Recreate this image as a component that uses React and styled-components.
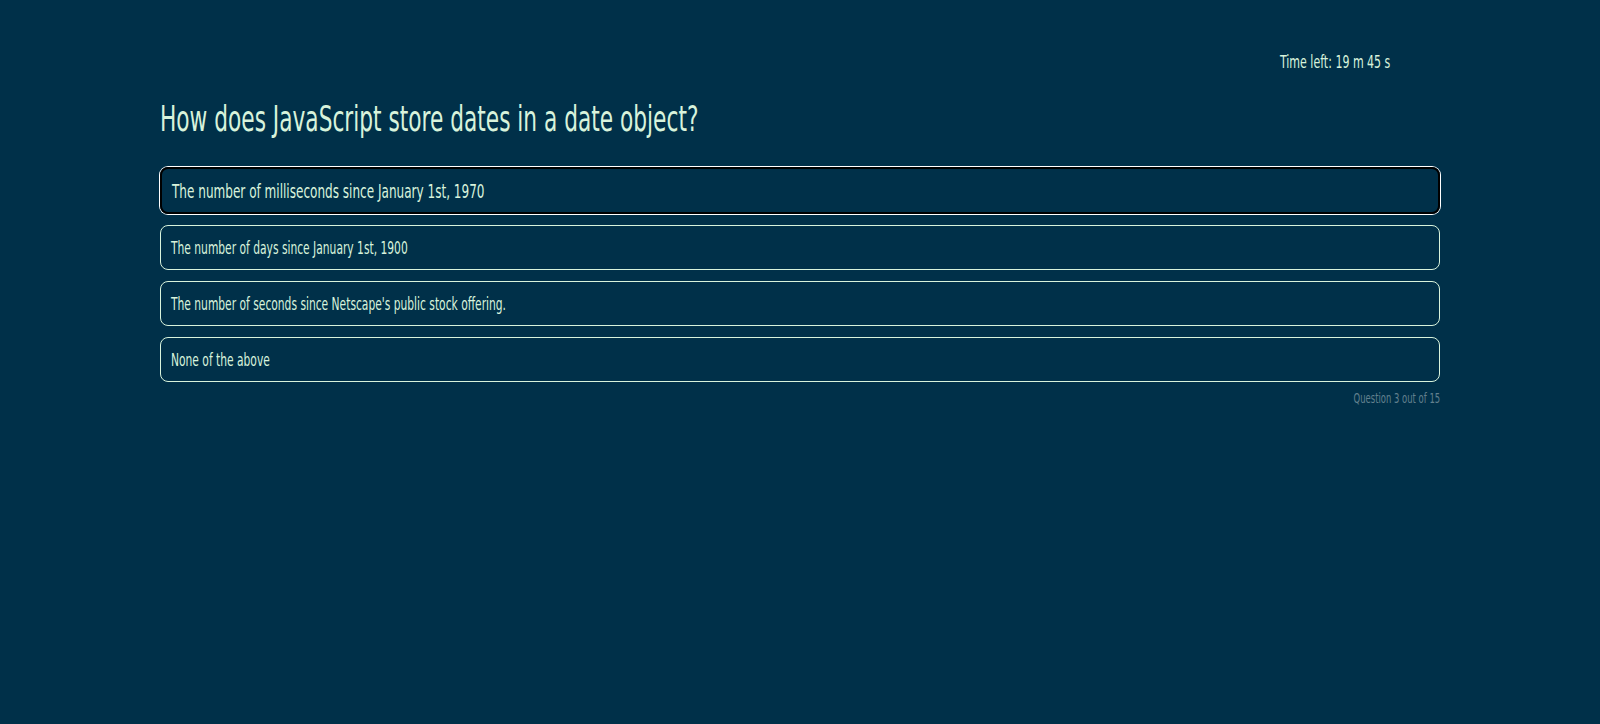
import React from 'react'
import styled, { createGlobalStyle } from 'styled-components'

const GlobalStyle = createGlobalStyle`
  html, body {
    margin: 0;
    padding: 0;
    background: #003049;
  }
  body {
    font-family: 'Liberation Sans Narrow', 'DejaVu Sans Condensed', 'DejaVu Sans', sans-serif;
    font-stretch: condensed;
    color: #d8f3dc;
  }
`

// no Oswald here, so condensed text is squeezed horizontally to get close
const Squeeze = styled.span`
  display: inline-block;
  white-space: nowrap;
  transform: scaleX(${props => props.scale || 0.7});
  transform-origin: ${props => (props.right ? 'right' : 'left')} center;
`

const Page = styled.div`
  min-height: 724px;
  background: #003049;
  padding-top: 52px;
  box-sizing: border-box;
`

const Quiz = styled.div`
  width: 1280px;
  margin: 0 auto;
`

const Timer = styled.div`
  display: flex;
  justify-content: flex-end;
  padding-right: 50px;
  font-size: 18px;
  line-height: 20px;
  color: #d8f3dc;
`

const Question = styled.h1`
  margin: 25px 0 0;
  font-size: 36px;
  font-weight: 400;
  line-height: 44px;
  color: #d8f3dc;
`

const Answers = styled.div`
  display: flex;
  flex-direction: column;
  gap: 11px;
  margin-top: 26px;
`

const Answer = styled.div`
  box-sizing: border-box;
  display: flex;
  align-items: center;
  height: ${props => (props.active ? 47 : 45)}px;
  padding: 0 10px;
  border-radius: 8px;
  border: ${props => (props.active ? '2px solid #000' : '1px solid #d8f3dc')};
  box-shadow: ${props => (props.active ? '0 0 0 1px #fff' : 'none')};
  font-size: ${props => (props.active ? 20 : 17)}px;
  color: #d8f3dc;
  cursor: pointer;
`

const Counter = styled.div`
  display: flex;
  justify-content: flex-end;
  margin-top: 8px;
  font-size: 14px;
  color: #62808e;
`

const answers = [
  'The number of milliseconds since January 1st, 1970',
  'The number of days since January 1st, 1900',
  "The number of seconds since Netscape's public stock offering.",
  'None of the above'
]

const App = () => {
  return (
    <Page>
      <GlobalStyle />
      <Quiz>
        <Timer>
          <Squeeze right scale={0.68}>Time left: 19 m 45 s</Squeeze>
        </Timer>
        <Question>
          <Squeeze scale={0.67}>How does JavaScript store dates in a date object?</Squeeze>
        </Question>
        <Answers>
          {answers.map((a, i) => (
            <Answer key={i} active={i === 0}>
              <Squeeze scale={i === 0 ? 0.67 : 0.7}>{a}</Squeeze>
            </Answer>
          ))}
        </Answers>
        <Counter>
          <Squeeze right scale={0.67}>Question 3 out of 15</Squeeze>
        </Counter>
      </Quiz>
    </Page>
  )
}

export default App
